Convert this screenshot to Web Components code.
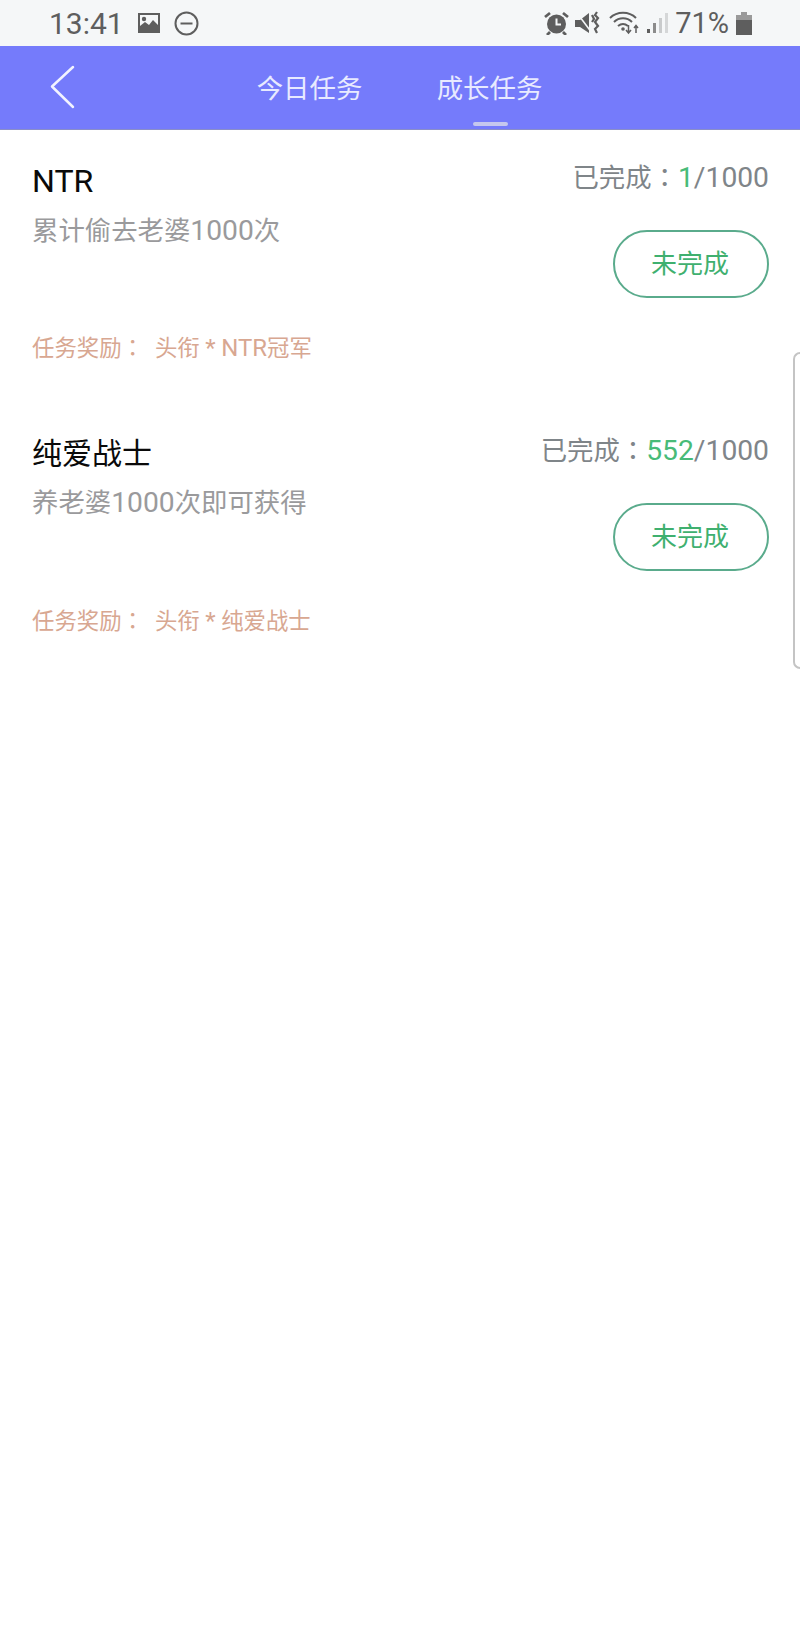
<!DOCTYPE html>
<html lang="zh">
<head>
<meta charset="utf-8">
<title>成长任务</title>
<style>
  html, body { margin: 0; padding: 0; background: #fff; }
  body { width: 800px; height: 1644px; overflow: hidden; position: relative; font-family: Roboto, "Noto Sans CJK SC", sans-serif; }
</style>
</head>
<body>
<status-bar></status-bar>
<app-header></app-header>
<task-card title="NTR" desc="累计偷去老婆1000次" done="1" total="1000" reward="头衔 * NTR冠军"></task-card>
<task-card title="纯爱战士" desc="养老婆1000次即可获得" done="552" total="1000" reward="头衔 * 纯爱战士"></task-card>
<side-handle></side-handle>

<script>
class StatusBar extends HTMLElement {
  constructor() {
    super();
    this._root = this.attachShadow({ mode: "open" });
    this._root.innerHTML = `
      <style>
        :host { display: flex; align-items: center; height: 46px; background: #f5f7f8; color: #5e5e5e;
                padding: 0 48px 0 49px; box-sizing: border-box; font-size: 30px; }
        .time { margin-right: 13px; }
        svg { display: block; flex: none; }
        .right { margin-left: auto; display: flex; align-items: center; font-size: 29px; }
      </style>
      <span class="time">13:41</span>
      <svg width="24" height="22" viewBox="0 0 24 22" style="margin-right:13px">
        <path fill="#5e5e5e" fill-rule="evenodd" d="M1 1h22v20H1zM3 3v11l5-4 4 3 4-5 5 5V3z"/>
        <circle cx="7" cy="7" r="2.200" fill="#5e5e5e"/>
      </svg>
      <svg width="25" height="25" viewBox="0 0 25 25">
        <circle cx="12.500" cy="12.500" r="11" fill="none" stroke="#5e5e5e" stroke-width="2"/>
        <path d="M6.500 12.500h12" stroke="#5e5e5e" stroke-width="2"/>
      </svg>
      <div class="right">
        <svg width="25" height="24" viewBox="0 0 25 24" style="margin-right:6px">
          <circle cx="12.500" cy="13" r="9.500" fill="#5e5e5e"/>
          <path d="M12.500 7.500v6h4.500" fill="none" stroke="#f5f7f8" stroke-width="2"/>
          <path d="M1 6l5-4M24 6l-5-4M6 21l-3 3M19 21l3 3" stroke="#5e5e5e" stroke-width="2.800"/>
        </svg>
        <svg width="25" height="24" viewBox="0 0 25 24" style="margin-right:9px">
          <path fill="#5e5e5e" d="M0 9h5l9-7v20l-9-6H0z"/>
          <path d="M2 2l15 20" stroke="#f5f7f8" stroke-width="1.500"/>
          <path d="M17 4l2 4-2 3M22 1l-2 3 3 3-3 4 3 4-3 3 2 4" fill="none" stroke="#5e5e5e" stroke-width="2.200"/>
        </svg>
        <svg width="30" height="24" viewBox="0 0 30 24" style="margin-right:7px">
          <path d="M1 7c7-7 19-7 26 0M5 11c5-5 13-5 18 0M9 15c3-2.500 7-2.500 10 0" fill="none" stroke="#5e5e5e" stroke-width="2"/>
          <circle cx="14" cy="18" r="1.800" fill="#5e5e5e"/>
          <path d="M19.500 14v7M17 19l2.500 3 2.500-3M27 22v-7M25 17l2-2.500 2 2.500" fill="none" stroke="#5e5e5e" stroke-width="1.500"/>
        </svg>
        <svg width="22" height="24" viewBox="0 0 22 24" style="margin-right:7px">
          <rect x="1" y="18" width="3" height="4" fill="#5e5e5e"/>
          <rect x="7" y="12" width="3" height="10" fill="#8c8c8c"/>
          <rect x="13" y="7" width="3" height="15" fill="#c9cbcc"/>
          <rect x="19" y="2" width="3" height="20" fill="#d5d7d8"/>
        </svg>
        <span>71%</span>
        <svg width="16" height="23" viewBox="0 0 16 23" style="margin-left:7px">
          <path fill="#9a9a9a" d="M5 0h6v3h5v7H0V3h5z"/>
          <rect y="8" width="16" height="15" fill="#5e5e5e"/>
        </svg>
      </div>
    `;
  }
}

class AppHeader extends HTMLElement {
  constructor() {
    super();
    this._root = this.attachShadow({ mode: "open" });
    this._root.innerHTML = `
      <style>
        :host { display: flex; height: 84px; background: #757bfb; color: #e8eaff; box-sizing: border-box;
                border-bottom: 1px solid #8a8ec8; font-size: 26.400px; }
        .back { flex: none; width: 256px; display: flex; align-items: flex-start; padding: 19px 0 0 50px; box-sizing: border-box; }
        .tabs { display: flex; gap: 73px; }
        .tab { position: relative; width: 107px; text-align: center; line-height: 87px; height: 83px; white-space: nowrap; }
        .tab.on::after { content: ""; position: absolute; left: 37px; bottom: 3px; width: 35px; height: 4px;
                         border-radius: 2px; background: #c5c7ee; }
      </style>
      <div class="back">
        <svg width="26" height="44" viewBox="0 0 26 44">
          <path d="M23 2L2 21.500 23 42" fill="none" stroke="#f2f3ff" stroke-width="2.500" stroke-linecap="round" stroke-linejoin="round"/>
        </svg>
      </div>
      <div class="tabs">
        <div class="tab">今日任务</div>
        <div class="tab on">成长任务</div>
      </div>
    `;
  }
}

class TaskButton extends HTMLElement {
  constructor() {
    super();
    this._root = this.attachShadow({ mode: "open" });
    this._root.innerHTML = `
      <style>
        :host { display: flex; align-items: center; justify-content: center; width: 156px; height: 68px;
                box-sizing: border-box; border: 2px solid #5aab8c; border-radius: 34px; padding: 0 2px 5px 0;
                color: #3fb06f; font-size: 26px; }
      </style>
      <slot></slot>
    `;
  }
}

// Latin runs render a bit bigger than the CJK ones on the device
function latin(text) {
  return text.replace(/[A-Za-z0-9/*]+/g, (m) => `<span class="l">${m}</span>`);
}

class TaskCard extends HTMLElement {
  constructor() {
    super();
    this._root = this.attachShadow({ mode: "open" });
    this._root.innerHTML = `
      <style>
        :host { display: block; height: 273px; box-sizing: border-box; padding: 31px 31px 0 32px; }
        .top { display: flex; justify-content: space-between; }
        .l { font-size: 1.070em; }
        .c { font-family: Roboto, "Noto Sans CJK TC", sans-serif; }
        .title { font-size: 30px; line-height: 40px; color: #0a0a0a; }
        .desc { font-size: 26.400px; line-height: 36px; color: #9a9a9c; margin-top: 11px; }
        .right { display: flex; flex-direction: column; align-items: flex-end; margin-top: -3px; }
        .progress { font-size: 26.400px; line-height: 40px; color: #7f8589; margin-bottom: 32px; }
        .progress b { font-weight: 400; color: #48bb78; }
        .reward { font-size: 22.400px; line-height: 30px; color: #d8a791; margin-top: 35px; white-space: pre; }
        .reward .gap { display: inline-block; width: 11px; }
      </style>
      <div class="top">
        <div>
          <div class="title"></div>
          <div class="desc"></div>
        </div>
        <div class="right">
          <div class="progress">已完成<span class="c" lang="zh-TW">：</span><b class="l"></b><span class="l">/<span class="total"></span></span></div>
          <task-button>未完成</task-button>
        </div>
      </div>
      <div class="reward"></div>
    `;
  }
  connectedCallback() {
    let q = (s) => this._root.querySelector(s);
    q(".title").innerHTML = latin(this.getAttribute("title"));
    q(".desc").innerHTML = latin(this.getAttribute("desc"));
    q("b").textContent = this.getAttribute("done");
    q(".total").textContent = this.getAttribute("total");
    q(".reward").innerHTML = `任务奖励<span class="c" lang="zh-TW">：</span><span class="gap"></span>` + latin(this.getAttribute("reward"));
  }
}

class SideHandle extends HTMLElement {
  constructor() {
    super();
    this._root = this.attachShadow({ mode: "open" });
    this._root.innerHTML = `
      <style>
        :host { position: absolute; right: 0; top: 352px; width: 7px; height: 317px; box-sizing: border-box; background: #fff;
                border: 2px solid #c4c4c4; border-right: 0; border-radius: 9px 0 0 9px; }
      </style>
    `;
  }
}

window.customElements.define("status-bar", StatusBar);
window.customElements.define("app-header", AppHeader);
window.customElements.define("task-button", TaskButton);
window.customElements.define("task-card", TaskCard);
window.customElements.define("side-handle", SideHandle);
</script>
</body>
</html>
